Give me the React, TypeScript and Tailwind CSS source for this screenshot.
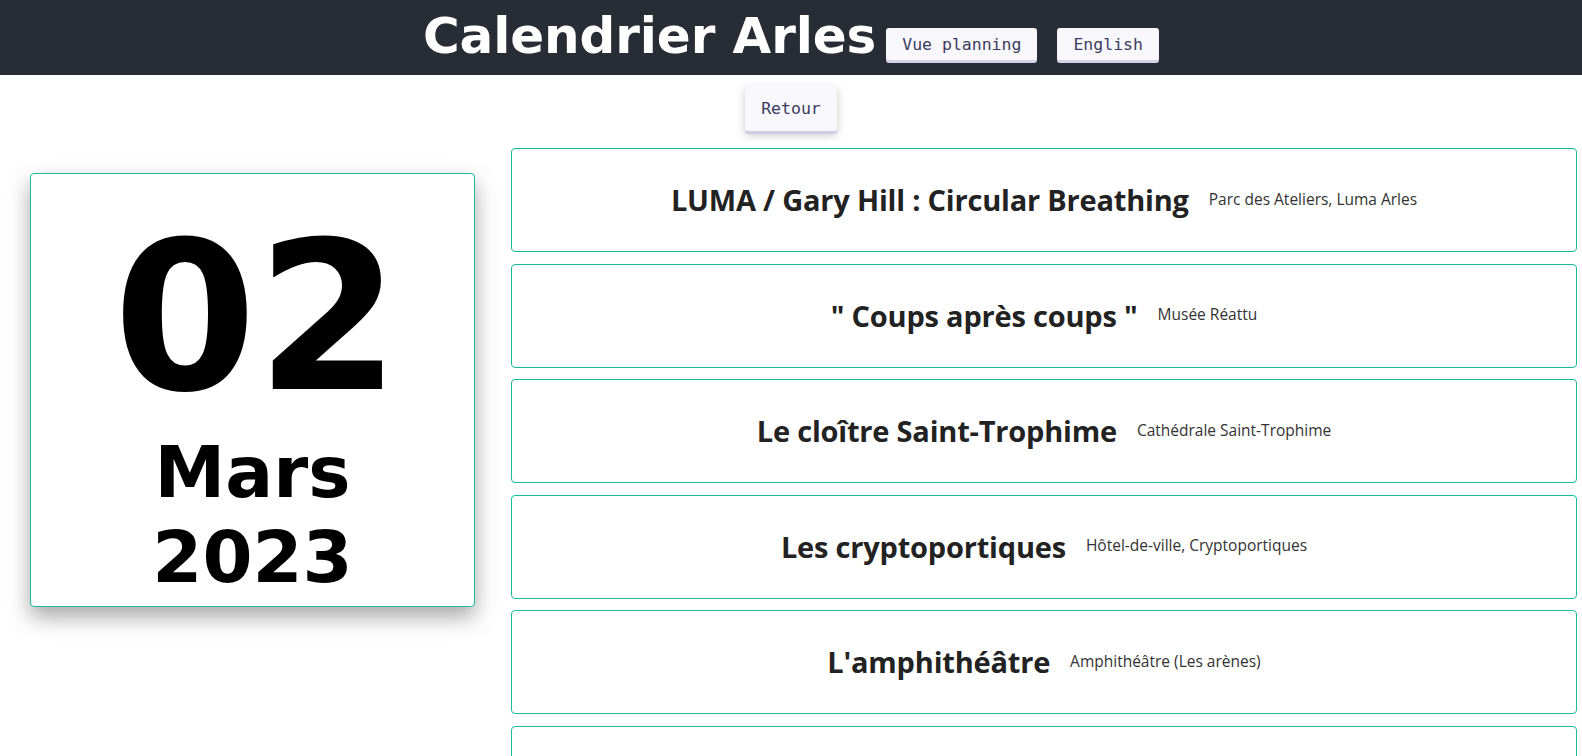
import React from "react";

const events = [
  { title: "LUMA / Gary Hill : Circular Breathing", place: "Parc des Ateliers, Luma Arles" },
  { title: "\" Coups après coups \"", place: "Musée Réattu" },
  { title: "Le cloître Saint-Trophime", place: "Cathédrale Saint-Trophime" },
  { title: "Les cryptoportiques", place: "Hôtel-de-ville, Cryptoportiques" },
  { title: "L'amphithéâtre", place: "Amphithéâtre (Les arènes)" },
  { title: "Les thermes de Constantin", place: "Thermes de Constantin" },
];

const btn =
  "bg-[#f8f8fc] text-[#3b3b5e] rounded-[3px] px-[16px] text-[16.5px] font-['DejaVu_Sans_Mono',monospace] leading-none";

export default function App() {
  return (
    <div className="w-[1582px] h-[756px] overflow-hidden bg-white">
      <header className="h-[75px] bg-[#282c34] flex justify-center items-start pt-[7px]">
        <h1 className="text-white font-bold text-[50px] leading-[58px] font-['DejaVu_Sans',Verdana,sans-serif] tracking-[-0.1px]">
          Calendrier Arles
        </h1>
        <button className={`${btn} ml-[10px] mt-[21px] h-[32px] pt-[3px] shadow-[0_3px_0_#d4d2e6]`}>Vue planning</button>
        <button className={`${btn} ml-[20px] mt-[21px] h-[32px] pt-[3px] shadow-[0_3px_0_#d4d2e6]`}>English</button>
      </header>
      <div className="flex justify-center mt-[10px]">
        <button
          className={`${btn} h-[46px] pt-[2px] shadow-[0_3px_0_#cfcce4,0_4px_10px_rgba(0,0,0,0.22)]`}
        >
          Retour
        </button>
      </div>
      <main className="flex mt-[17px]">
        <div className="w-[511px] shrink-0">
          <div className="ml-[30px] mt-[25px] w-[445px] h-[434px] border border-[#1abc9c] rounded-[4px] bg-white shadow-[0_10px_22px_rgba(0,0,0,0.35)] flex flex-col items-center pt-[31px] text-black font-bold font-['DejaVu_Sans',Verdana,sans-serif]">
            <div className="text-[206px] leading-[226px] pl-[8px]">02</div>
            <div className="text-[71px] leading-[84px]">Mars</div>
            <div className="text-[72px] leading-[84px]">2023</div>
          </div>
        </div>
        <div className="flex-1 pr-[5px] flex flex-col gap-[11.5px]">
          {events.map((e) => (
            <div
              key={e.title}
              className="h-[104px] shrink-0 border border-[#1abc9c] rounded-[4px] flex items-center justify-center font-['Open_Sans','Noto_Sans',sans-serif]"
            >
              <span className="text-[29px] font-bold text-[#222] tracking-[-0.2px]">{e.title}</span>
              <span className="ml-[20px] text-[15.5px] text-[#333] -mt-[1px]">{e.place}</span>
            </div>
          ))}
        </div>
      </main>
    </div>
  );
}
